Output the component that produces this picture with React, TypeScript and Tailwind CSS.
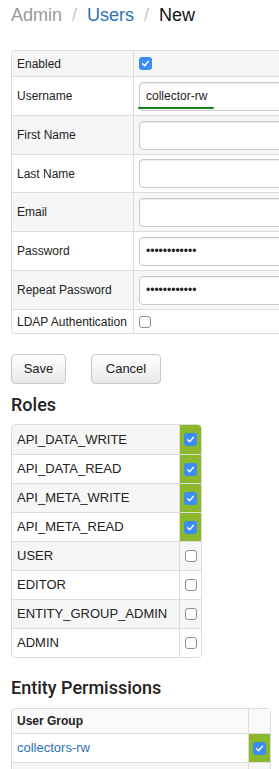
import React from 'react'

const roles = [
  { name: 'API_DATA_WRITE', checked: true },
  { name: 'API_DATA_READ', checked: true },
  { name: 'API_META_WRITE', checked: true },
  { name: 'API_META_READ', checked: true },
  { name: 'USER', checked: false },
  { name: 'EDITOR', checked: false },
  { name: 'ENTITY_GROUP_ADMIN', checked: false },
  { name: 'ADMIN', checked: false },
]

function Check({ checked }: { checked: boolean }) {
  if (!checked) {
    return <span className="block w-[12px] h-[12px] rounded-[3px] border border-[#8f8f8f] bg-white" />
  }
  return (
    <span className="flex items-center justify-center w-[13px] h-[13px] rounded-[3px] bg-[#3b8cf6]">
      <svg width="9" height="9" viewBox="0 0 9 9">
        <path d="M1.6 4.8 L3.6 6.8 L7.4 2.2" fill="none" stroke="white" strokeWidth="1.4" strokeLinecap="round" strokeLinejoin="round" />
      </svg>
    </span>
  )
}

function TextInput({ value, type = 'text', underline }: { value?: string; type?: string; underline?: boolean }) {
  return (
    <div className="relative flex-1">
      <input
        type={type}
        readOnly
        value={value || ''}
        className="w-full h-[29px] rounded-[4px] border border-[#c8c8c8] bg-white pl-[6px] text-[12px] text-[#222] shadow-[inset_0_1px_1px_rgba(0,0,0,0.08)] outline-none"
      />
      {underline && <span className="absolute left-[-1px] top-[25px] w-[76px] h-[2px] rounded-full bg-[#17801a]" />}
    </div>
  )
}

function FormRow({ label, children, h, striped, first }: { label: string; children: React.ReactNode; h: string; striped: boolean; first?: boolean }) {
  return (
    <div className={`grid grid-cols-[121px_1fr] ${h} ${first ? '' : 'border-t border-[#dcdcdc]'} ${striped ? 'bg-[#f6f6f6]' : 'bg-white'}`}>
      <div className="flex items-center pl-[5px] text-[12px] text-[#222]">{label}</div>
      <div className="flex items-center pl-[5px] border-l border-[#dcdcdc]">{children}</div>
    </div>
  )
}

export default function App() {
  return (
    <div className="w-[279px] h-[769px] overflow-hidden bg-white text-[#333]" style={{ fontFamily: '"Liberation Sans", Arial, sans-serif' }}>
      <div className="w-[440px] pl-[11px]">
        {/* breadcrumb */}
        <div className="flex items-baseline h-[27px] pt-[4px] text-[18px] leading-[22px]">
          <span className="text-[#9a9a9a]">Admin</span>
          <span className="text-[#c8c8c8] px-[10px]">/</span>
          <span className="text-[#2e72b6]">Users</span>
          <span className="text-[#c8c8c8] px-[10px]">/</span>
          <span className="text-[#111]">New</span>
        </div>

        {/* user form */}
        <div className="mt-[23px] w-[420px] border border-[#dcdcdc] rounded-[4px] overflow-hidden">
          <FormRow label="Enabled" h="h-[25px]" striped first>
            <Check checked />
          </FormRow>
          <FormRow label="Username" h="h-[39px]" striped={false}>
            <TextInput value="collector-rw" underline />
          </FormRow>
          <FormRow label="First Name" h="h-[39px]" striped>
            <TextInput />
          </FormRow>
          <FormRow label="Last Name" h="h-[38px]" striped={false}>
            <TextInput />
          </FormRow>
          <FormRow label="Email" h="h-[39px]" striped>
            <TextInput />
          </FormRow>
          <FormRow label="Password" h="h-[39px]" striped={false}>
            <TextInput type="password" value="collectorrw1" />
          </FormRow>
          <FormRow label="Repeat Password" h="h-[39px]" striped>
            <TextInput type="password" value="collectorrw1" />
          </FormRow>
          <FormRow label="LDAP Authentication" h="h-[24px]" striped={false}>
            <Check checked={false} />
          </FormRow>
        </div>

        <div className="flex gap-[25px] mt-[20px]">
          <button className="w-[55px] h-[30px] rounded-[4px] border border-[#c8c8c8] bg-linear-to-b from-white to-[#e9e9e9] text-[13px] text-[#222]">Save</button>
          <button className="w-[70px] h-[30px] rounded-[4px] border border-[#c8c8c8] bg-linear-to-b from-white to-[#e9e9e9] text-[13px] text-[#222]">Cancel</button>
        </div>

        {/* roles */}
        <h2 className="mt-[11px] text-[18px] leading-[20px] font-medium text-[#222]" style={{ fontFamily: 'Roboto, "Liberation Sans", sans-serif' }}>Roles</h2>
        <div className="mt-[9px] w-[191px] border border-[#dcdcdc] rounded-[4px] overflow-hidden">
          {roles.map((r, i) => (
            <div key={r.name} className={`grid grid-cols-[167px_1fr] h-[29px] ${i === 0 ? 'h-[28px]' : 'border-t border-[#dcdcdc]'} ${i % 2 === 0 ? 'bg-[#f6f6f6]' : 'bg-white'}`}>
              <div className="flex items-center pl-[5px] text-[13px] text-[#222]">{r.name}</div>
              <div className={`flex items-center justify-center border-l border-[#dcdcdc] ${r.checked ? 'bg-[#8cb92b]' : ''}`}>
                <Check checked={r.checked} />
              </div>
            </div>
          ))}
        </div>

        {/* entity permissions */}
        <h2 className="mt-[20px] text-[18px] leading-[20px] font-medium text-[#222]" style={{ fontFamily: 'Roboto, "Liberation Sans", sans-serif' }}>Entity Permissions</h2>
        <div className="mt-[10px] w-[260px] border border-[#dcdcdc] rounded-[4px] overflow-hidden">
          <div className="grid grid-cols-[236px_1fr] h-[24px] bg-[#fafafa]">
            <div className="flex items-center pl-[5px] text-[12px] font-bold text-[#222]">User Group</div>
            <div className="border-l border-[#dcdcdc]" />
          </div>
          <div className="grid grid-cols-[236px_1fr] h-[29px] border-t border-[#dcdcdc] bg-white">
            <div className="flex items-center pl-[5px] text-[13px] text-[#2e72b6]">collectors-rw</div>
            <div className="flex items-center justify-center border-l border-[#dcdcdc] bg-[#8cb92b]">
              <Check checked />
            </div>
          </div>
          <div className="grid grid-cols-[236px_1fr] h-[29px] border-t border-[#dcdcdc] bg-[#f6f6f6]">
            <div />
            <div className="border-l border-[#dcdcdc]" />
          </div>
        </div>
      </div>
    </div>
  )
}
